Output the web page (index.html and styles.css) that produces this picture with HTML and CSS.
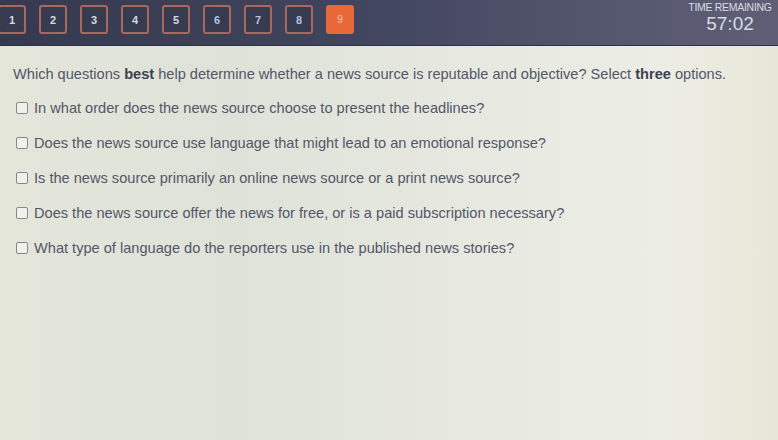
FILE: index.html
```html
<!DOCTYPE html>
<html>
<head>
<meta charset="utf-8">
<link rel="stylesheet" href="styles.css">
</head>
<body>
<header class="topbar">
  <nav class="qnav">
    <span class="qbtn">1</span>
    <span class="qbtn">2</span>
    <span class="qbtn">3</span>
    <span class="qbtn">4</span>
    <span class="qbtn">5</span>
    <span class="qbtn blue">6</span>
    <span class="qbtn blue">7</span>
    <span class="qbtn blue">8</span>
    <span class="qbtn current">9</span>
  </nav>
  <div class="timer">
    <div class="timer-label">TIME REMAINING</div>
    <div class="timer-value">57:02</div>
  </div>
</header>
<main class="content">
  <p class="question">Which questions <b>best</b> help determine whether a news source is reputable and objective? Select <b>three</b> options.</p>
  <ul class="options">
    <li class="option"><span class="box"></span><span>In what order does the news source choose to present the headlines?</span></li>
    <li class="option"><span class="box"></span><span>Does the news source use language that might lead to an emotional response?</span></li>
    <li class="option"><span class="box"></span><span>Is the news source primarily an online news source or a print news source?</span></li>
    <li class="option"><span class="box"></span><span>Does the news source offer the news for free, or is a paid subscription necessary?</span></li>
    <li class="option"><span class="box"></span><span>What type of language do the reporters use in the published news stories?</span></li>
  </ul>
</main>
</body>
</html>
```
FILE: styles.css
```css
html, body {
  margin: 0;
  padding: 0;
  height: 100%;
}
body {
  font-family: "Liberation Sans", Arial, sans-serif;
  background: linear-gradient(90deg, #e4e6da 0%, #dfe2d8 30%, #e7e9e0 60%, #ecede4 85%, #e8e6d8 100%);
  color: #4c5165;
  overflow: hidden;
}
.topbar {
  height: 46px;
  box-sizing: border-box;
  display: flex;
  justify-content: space-between;
  align-items: flex-start;
  background: linear-gradient(90deg, #353a50 0%, #40445c 45%, #56586f 80%, #5e5f76 100%);
  border-bottom: 1px solid #2e3244;
}
.qnav {
  display: flex;
  gap: 13px;
  margin-left: -2px;
  padding-top: 5px;
}
.qbtn {
  width: 28px;
  height: 29px;
  box-sizing: border-box;
  border: 2px solid #a8685c;
  border-radius: 3px;
  background: #363b4f;
  color: #d6dae4;
  font-size: 11px;
  font-weight: bold;
  display: flex;
  align-items: center;
  justify-content: center;
}
.qbtn.blue {
  color: #b4c2e8;
}
.qbtn.current {
  background: #e8683a;
  border-color: #e8683a;
  color: #f4c3a8;
  font-weight: normal;
  font-size: 10px;
}
.timer {
  width: 92px;
  padding-top: 2px;
  margin-right: 2px;
  text-align: center;
  color: #d9dbe4;
}
.timer-label {
  font-size: 10.5px;
  line-height: 11px;
  letter-spacing: -0.3px;
}
.timer-value {
  font-size: 19px;
  line-height: 22px;
}
.content {
  padding: 19px 0 0 13px;
}
.question {
  margin: 0;
  font-size: 14.6px;
  line-height: 18px;
  color: #525769;
}
.question b {
  color: #3d4154;
}
.options {
  list-style: none;
  margin: 16px 0 0 0;
  padding: 0 0 0 3px;
}
.option {
  display: flex;
  align-items: center;
  gap: 6px;
  height: 18px;
  margin-bottom: 17px;
  font-size: 14.6px;
  color: #525769;
}
.box {
  width: 12px;
  height: 12px;
  box-sizing: border-box;
  border: 1.5px solid #85888c;
  border-radius: 2px;
  background: #f1f2ec;
  flex: none;
}
```
